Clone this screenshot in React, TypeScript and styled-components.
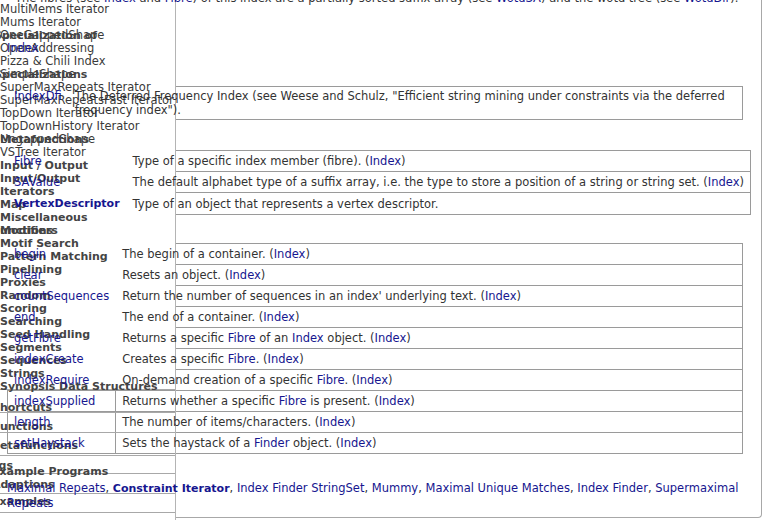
import React from "react";
import styled, { createGlobalStyle } from "styled-components";

const GlobalStyle = createGlobalStyle`
  html, body { margin: 0; padding: 0; background: #fff; }
  body {
    font-family: "DejaVu Sans", Verdana, sans-serif;
    font-size: 11.5px;
    color: #333;
    overflow: hidden;
  }
`;

const Page = styled.div`
  display: grid;
  width: 763px;
  height: 520px;
  overflow: hidden;
  background: #fff;
`;

/* ---------- main document ---------- */

const Frame = styled.main`
  grid-area: 1 / 1;
  box-sizing: border-box;
  width: 762px;
  height: 518px;
  padding: 0 18px 0 7px;
  border-right: 1px solid #a8a8a8;
  border-bottom: 1px solid #a8a8a8;
  border-bottom-right-radius: 4px;
  display: flex;
  flex-direction: column;
`;

const Intro = styled.p`
  position: relative;
  z-index: 2;
  margin: -9px 0 0 8px;
  line-height: 14px;
  white-space: nowrap;
`;

const Link = styled.a<{ $bold?: boolean }>`
  color: #16168f;
  text-decoration: none;
  font-weight: ${(p) => (p.$bold ? "bold" : "normal")};
  font-size: ${(p) => (p.$bold ? "11px" : "inherit")};
`;

const Table = styled.table<{ $gap: number }>`
  width: 100%;
  border-collapse: collapse;
  margin-top: ${(p) => p.$gap}px;
  flex: none;
`;

const NameCell = styled.td<{ $tight?: boolean }>`
  border: 1px solid #9a9a9a;
  padding: ${(p) => (p.$tight ? "2px 6px" : "3px 6px")};
  white-space: nowrap;
  vertical-align: top;
  line-height: 14px;
`;

const DescCell = styled.td<{ $tight?: boolean }>`
  border: 1px solid #9a9a9a;
  padding: ${(p) => (p.$tight ? "2px 6px" : "3px 6px")};
  width: 100%;
  line-height: 14px;
  white-space: ${(p) => (p.$tight ? "normal" : "nowrap")};
`;

const CellText = styled.span`
  position: relative;
  z-index: 2;
`;

const Examples = styled.p`
  position: relative;
  z-index: 2;
  margin: 27px -18px 0 0;
  line-height: 15px;
`;

/* ---------- sidebar (overlaps the document) ---------- */

const Sidebar = styled.nav`
  grid-area: 1 / 1;
  z-index: 1;
  box-sizing: border-box;
  width: 176px;
  height: 520px;
  border-right: 1px solid #b4b4b4;
  display: flex;
  flex-direction: column;
  overflow: hidden;
`;

const Upper = styled.div`
  display: grid;
  box-sizing: border-box;
  height: 390px;
  flex: none;
  background: #fff;
  border-bottom: 1px solid #a8a8a8;
`;

const Layer = styled.ul<{ $top: number }>`
  grid-area: 1 / 1;
  list-style: none;
  margin: 0;
  padding: ${(p) => p.$top}px 0 0;
  line-height: 13px;
`;

const Item = styled.li<{ $bold?: boolean; $shift?: number }>`
  height: 13px;
  white-space: nowrap;
  font-weight: ${(p) => (p.$bold ? "bold" : "normal")};
  font-size: ${(p) => (p.$bold ? "11px" : "11.5px")};
  color: ${(p) => (p.$bold ? "#444" : "#3a3a3a")};
  margin-left: ${(p) => p.$shift ?? 0}px;
`;

const Overlap = styled.span`
  display: inline-grid;
  & > * {
    grid-area: 1 / 1;
  }
`;

const Shifted = styled.span<{ $shift: number }>`
  margin-left: ${(p) => p.$shift}px;
`;

const Lower = styled.div`
  display: grid;
  flex: 1;
`;

const LowerList = styled.ul`
  grid-area: 1 / 1;
  list-style: none;
  margin: 0;
  padding: 0;
  display: flex;
  flex-direction: column;
`;

const LowerRow = styled.li<{ $h: number; $pad: number; $white?: boolean }>`
  box-sizing: border-box;
  height: ${(p) => p.$h}px;
  padding-top: ${(p) => p.$pad}px;
  line-height: 13px;
  font-size: 11px;
  font-weight: bold;
  color: #444;
  white-space: nowrap;
  border-bottom: 1px solid #a8a8a8;
  background: ${(p) => (p.$white ? "#fff" : "transparent")};
`;

const LowerFill = styled.li`
  flex: 1;
  background: #fff;
`;

const LowerOverlay = styled.div`
  grid-area: 1 / 1;
  padding-top: 74.5px;
  margin-left: -8px;
  line-height: 13px;
  font-size: 11px;
  font-weight: bold;
  color: #444;
  white-space: nowrap;
`;

/* ---------- data ---------- */

const regularItems = [
  "MultiMems Iterator",
  "Mums Iterator",
  "OneGappedShape",
  "OpenAddressing",
  "Pizza & Chili Index",
  "SimpleShape",
  "SuperMaxRepeats Iterator",
  "SuperMaxRepeatsFast Iterator",
  "TopDown Iterator",
  "TopDownHistory Iterator",
  "UngappedShape",
  "VSTree Iterator",
];

const headerItems = [
  "Input / Output",
  "Input/Output",
  "Iterators",
  "Map",
  "Miscellaneous",
  "__MOD__",
  "Motif Search",
  "Pattern Matching",
  "Pipelining",
  "Proxies",
  "Random",
  "Scoring",
  "Searching",
  "Seed Handling",
  "Segments",
  "Sequences",
  "Strings",
  "Synopsis Data Structures",
];

const lowerRows = [
  { t: "Shortcuts", h: 23, pad: 10.5, shift: -8 },
  { t: "Functions", h: 20, pad: 6.5, shift: -7 },
  { t: "Metafunctions", h: 23, pad: 5.5, shift: -11 },
  { t: "Tags", h: 18, pad: 2.5, shift: -15, white: true },
  { t: "Adaptions", h: 20, pad: 3.5, shift: -8, white: true },
  { t: "Examples", h: 19, pad: 0.5, shift: -8, white: true },
];

const Idx = () => <Link href="#">Index</Link>;
const Fib = () => <Link href="#">Fibre</Link>;

const typeRows: { name: string; bold?: boolean; desc: React.ReactNode }[] = [
  {
    name: "Fibre",
    desc: (
      <>
        Type of a specific index member (fibre). (<Idx />)
      </>
    ),
  },
  {
    name: "SAValue",
    desc: (
      <>
        The default alphabet type of a suffix array, i.e. the type to store a position of a string or
        string set. (<Idx />)
      </>
    ),
  },
  {
    name: "VertexDescriptor",
    bold: true,
    desc: <>Type of an object that represents a vertex descriptor.</>,
  },
];

const funcRows: { name: string; desc: React.ReactNode }[] = [
  { name: "begin", desc: <>The begin of a container. (<Idx />)</> },
  { name: "clear", desc: <>Resets an object. (<Idx />)</> },
  {
    name: "countSequences",
    desc: <>Return the number of sequences in an index' underlying text. (<Idx />)</>,
  },
  { name: "end", desc: <>The end of a container. (<Idx />)</> },
  {
    name: "getFibre",
    desc: (
      <>
        Returns a specific <Fib /> of an <Idx /> object. (<Idx />)
      </>
    ),
  },
  {
    name: "indexCreate",
    desc: (
      <>
        Creates a specific <Fib />. (<Idx />)
      </>
    ),
  },
  {
    name: "indexRequire",
    desc: (
      <>
        On-demand creation of a specific <Fib />. (<Idx />)
      </>
    ),
  },
  {
    name: "indexSupplied",
    desc: (
      <>
        Returns whether a specific <Fib /> is present. (<Idx />)
      </>
    ),
  },
  { name: "length", desc: <>The number of items/characters. (<Idx />)</> },
  {
    name: "setHaystack",
    desc: (
      <>
        Sets the haystack of a <Link href="#">Finder</Link> object. (<Idx />)
      </>
    ),
  },
];

export default function App() {
  return (
    <>
      <GlobalStyle />
      <Page>
        <Frame>
          <Intro>
            The fibres (see <Link href="#">Index</Link> and <Link href="#">Fibre</Link>) of this index are a
            partially sorted suffix array (see <Link href="#">WotdSA</Link>) and the wotd tree (see{" "}
            <Link href="#">WotdDir</Link>).
          </Intro>

          <Table $gap={81}>
            <tbody>
              <tr>
                <NameCell $tight>
                  <CellText>
                    <Link href="#">IndexDfi</Link>
                  </CellText>
                </NameCell>
                <DescCell $tight>
                  <CellText>
                    The Deferred Frequency Index (see Weese and Schulz, "Efficient string mining under
                    constraints via the deferred frequency index").
                  </CellText>
                </DescCell>
              </tr>
            </tbody>
          </Table>

          <Table $gap={30}>
            <tbody>
              {typeRows.map((r) => (
                <tr key={r.name}>
                  <NameCell>
                    <CellText>
                      <Link href="#" $bold={r.bold}>
                        {r.name}
                      </Link>
                    </CellText>
                  </NameCell>
                  <DescCell>
                    <CellText>{r.desc}</CellText>
                  </DescCell>
                </tr>
              ))}
            </tbody>
          </Table>

          <Table $gap={28}>
            <tbody>
              {funcRows.map((r) => (
                <tr key={r.name}>
                  <NameCell>
                    <CellText>
                      <Link href="#">{r.name}</Link>
                    </CellText>
                  </NameCell>
                  <DescCell>
                    <CellText>{r.desc}</CellText>
                  </DescCell>
                </tr>
              ))}
            </tbody>
          </Table>

          <Examples>
            <Link href="#">Maximal Repeats</Link>, <Link href="#" $bold>Constraint Iterator</Link>,{" "}
            <Link href="#">Index Finder StringSet</Link>, <Link href="#">Mummy</Link>,{" "}
            <Link href="#">Maximal Unique Matches</Link>, <Link href="#">Index Finder</Link>,{" "}
            <Link href="#">Supermaximal Repeats</Link>
          </Examples>
        </Frame>

        <Sidebar>
          <Upper>
            <Layer $top={2.5}>
              {regularItems.map((t) => (
                <Item key={t}>{t}</Item>
              ))}
            </Layer>
            <Layer $top={2.5}>
              <Item />
              <Item />
              <Item $bold $shift={-6}>
                Specialization of
              </Item>
              <Item $shift={7}>
                <Link href="#">Index</Link>
              </Item>
              <Item />
              <Item $bold $shift={-6}>
                Specializations
              </Item>
              <Item />
              <Item />
              <Item />
              <Item />
              <Item $bold>Metafunctions</Item>
              <Item />
              {headerItems.map((t) =>
                t === "__MOD__" ? (
                  <Item key={t} $bold>
                    <Overlap>
                      <span>Modifiers</span>
                      <Shifted $shift={-7}>Functions</Shifted>
                    </Overlap>
                  </Item>
                ) : (
                  <Item key={t} $bold>
                    {t}
                  </Item>
                )
              )}
            </Layer>
          </Upper>
          <Lower>
            <LowerList>
              {lowerRows.map((r) => (
                <LowerRow key={r.t} $h={r.h} $pad={r.pad} $white={r.white}>
                  <Shifted $shift={r.shift}>{r.t}</Shifted>
                </LowerRow>
              ))}
              <LowerFill />
            </LowerList>
            <LowerOverlay>Example Programs</LowerOverlay>
          </Lower>
        </Sidebar>
      </Page>
    </>
  );
}
